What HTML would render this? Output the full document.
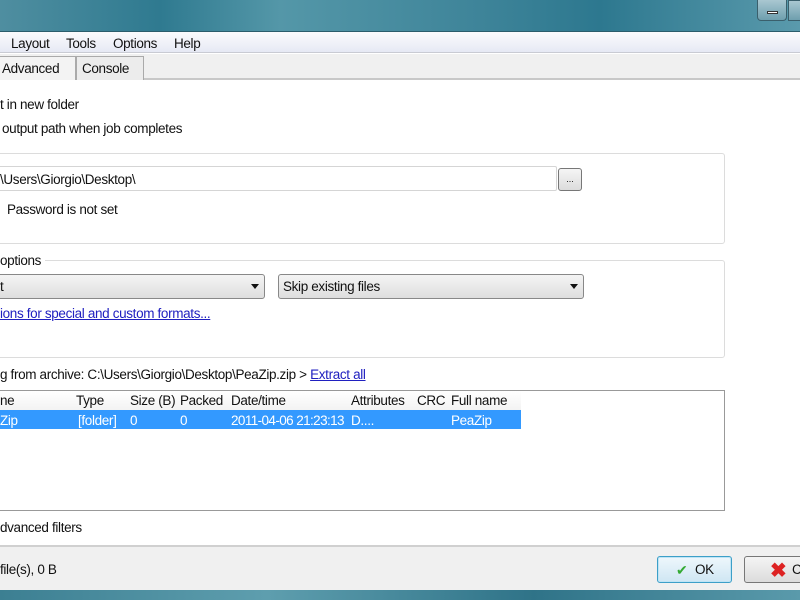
<!DOCTYPE html>
<html><head><style>
*{margin:0;padding:0;box-sizing:border-box}
body{width:800px;height:600px;overflow:hidden;background:#fff;font-family:"Liberation Sans",sans-serif;font-size:13.5px;color:#111;position:relative}
.a{position:absolute;white-space:nowrap}
.t{letter-spacing:-0.35px;margin-top:1px}
</style></head><body>
<div class="a" style="left:0;top:0;width:800px;height:32px;background:linear-gradient(90deg,#4f8ea0 0%,#2f7a90 20%,#5497a8 35%,#3e8499 60%,#2d788f 75%,#5a9aac 100%);border-bottom:1px solid #2b5d6c"></div>
<div class="a" style="left:757px;top:0;width:30px;height:21px;border:1px solid #3a5f6c;border-top:none;border-radius:0 0 4px 4px;background:linear-gradient(#a9c7d1,#6e9fae)"><div class="a" style="left:9px;top:11px;width:11px;height:3px;background:#fff;border:1px solid #333"></div></div>
<div class="a" style="left:788px;top:0;width:14px;height:21px;border:1px solid #3a5f6c;background:linear-gradient(#a9c7d1,#6e9fae)"></div>
<div class="a" style="left:0;top:32px;width:800px;height:21px;background:linear-gradient(#fbfbfd,#e6e9f4);border-bottom:1px solid #c9cbd3"></div>
<div class="a t" style="left:11px;top:35px">Layout</div>
<div class="a t" style="left:66px;top:35px">Tools</div>
<div class="a t" style="left:113px;top:35px">Options</div>
<div class="a t" style="left:174px;top:35px">Help</div>
<div class="a" style="left:0;top:54px;width:800px;height:26px;background:#f0f0f0;border-bottom:2px solid #c8c8c8"></div>
<div class="a" style="left:0;top:56px;width:76px;height:24px;border:1px solid #aaa;border-left:none;border-bottom:none;background:#f3f3f3"></div>
<div class="a t" style="left:2px;top:60px">Advanced</div>
<div class="a" style="left:76px;top:56px;width:68px;height:24px;border:1px solid #aaa;border-bottom:none;background:#ececec"></div>
<div class="a t" style="left:82px;top:60px">Console</div>
<div class="a t" style="left:0;top:96px">t in new folder</div>
<div class="a t" style="left:2px;top:120px">output path when job completes</div>
<div class="a" style="left:-5px;top:153px;width:730px;height:91px;border:1px solid #dcdcdc;border-radius:3px"></div>
<div class="a" style="left:-5px;top:166px;width:562px;height:25px;border:1px solid #d5d5d5;border-radius:2px;background:#fff"></div>
<div class="a t" style="left:0;top:171px">\Users\Giorgio\Desktop\</div>
<div class="a" style="left:558px;top:168px;width:24px;height:23px;border:1px solid #777;border-radius:3px;background:linear-gradient(#f5f5f5,#dcdcdc);font-size:9px;text-align:center;line-height:20px">...</div>
<div class="a t" style="left:7px;top:201px">Password is not set</div>
<div class="a" style="left:-5px;top:260px;width:730px;height:98px;border:1px solid #dcdcdc;border-radius:3px"></div>
<div class="a t" style="left:0;top:252px;background:#fff;padding-right:4px">options</div>
<div class="a" style="left:-5px;top:274px;width:270px;height:25px;border:1px solid #888;border-radius:3px;background:linear-gradient(#f4f4f4,#dedede)"></div>
<div class="a t" style="left:0;top:278px">t</div>
<div class="a" style="left:251px;top:284px;border:4px solid transparent;border-top:5px solid #111"></div>
<div class="a" style="left:278px;top:274px;width:306px;height:25px;border:1px solid #888;border-radius:3px;background:linear-gradient(#f4f4f4,#dedede)"></div>
<div class="a t" style="left:283px;top:278px">Skip existing files</div>
<div class="a" style="left:570px;top:284px;border:4px solid transparent;border-top:5px solid #111"></div>
<div class="a t" style="left:0;top:305px;text-decoration:underline;color:#2020c0">ions for special and custom formats...</div>
<div class="a t" style="left:0;top:366px">g from archive: C:\Users\Giorgio\Desktop\PeaZip.zip &gt; <span style="color:#2020c0;text-decoration:underline">Extract all</span></div>
<div class="a" style="left:-5px;top:390px;width:730px;height:121px;border:1px solid #999;background:#fff"></div>
<div class="a" style="left:0;top:391px;width:521px;height:19px;background:linear-gradient(#fff,#f3f3f3)"></div>
<div class="a t" style="left:0;top:392px">ne</div>
<div class="a t" style="left:76px;top:392px">Type</div>
<div class="a t" style="left:130px;top:392px">Size (B)</div>
<div class="a t" style="left:180px;top:392px">Packed</div>
<div class="a t" style="left:231px;top:392px">Date/time</div>
<div class="a t" style="left:351px;top:392px">Attributes</div>
<div class="a t" style="left:417px;top:392px">CRC</div>
<div class="a t" style="left:451px;top:392px">Full name</div>
<div class="a" style="left:0;top:410px;width:521px;height:19px;background:#3399ff"></div>
<div class="a t" style="left:0;top:412px;color:#fff">Zip</div>
<div class="a t" style="left:78px;top:412px;color:#fff">[folder]</div>
<div class="a t" style="left:130px;top:412px;color:#fff">0</div>
<div class="a t" style="left:180px;top:412px;color:#fff">0</div>
<div class="a t" style="left:231px;top:412px;color:#fff;letter-spacing:-0.6px">2011-04-06 21:23:13</div>
<div class="a t" style="left:351px;top:412px;color:#fff">D....</div>
<div class="a t" style="left:451px;top:412px;color:#fff">PeaZip</div>
<div class="a t" style="left:0;top:519px">dvanced filters</div>
<div class="a" style="left:0;top:545px;width:800px;height:45px;background:#f0f0f0;border-top:2px solid #d0d0d0"></div>
<div class="a t" style="left:0;top:561px">file(s), 0 B</div>
<div class="a" style="left:657px;top:556px;width:75px;height:27px;border:1px solid #3c9fc8;border-radius:3px;background:linear-gradient(#eef7fc,#cfe6f3);box-shadow:inset 0 0 0 1px #bfe4f5"></div>
<div class="a t" style="left:676px;top:561px;color:#3a3;font-size:14px">✔</div>
<div class="a t" style="left:695px;top:561px">OK</div>
<div class="a" style="left:744px;top:556px;width:70px;height:27px;border:1px solid #777;border-radius:3px;background:linear-gradient(#f4f4f4,#dcdcdc)"></div>
<div class="a" style="left:770px;top:558px;color:#d22;font-size:20px;font-weight:bold">✖</div>
<div class="a t" style="left:792px;top:561px">C</div>
<div class="a" style="left:0;top:590px;width:800px;height:10px;background:linear-gradient(90deg,#3c7f92,#5e9eae,#2f7388,#5a9aab)"></div>
</body></html>
